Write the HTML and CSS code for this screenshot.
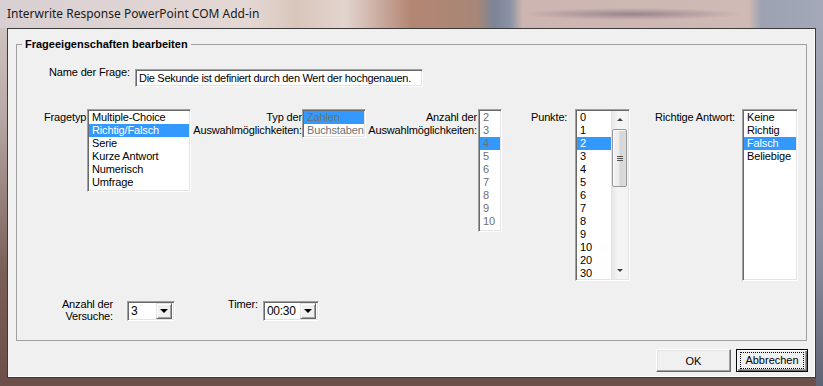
FILE: index.html
```html
<!doctype html>
<html>
<head>
    <title>Interwrite Response PowerPoint COM Add-in</title>
    <meta name="viewport" content="width=device-width, initial-scale=1.0">
    <link rel="stylesheet" href="styles.css">
</head>
<body>

    <div class="window">
        <div class="titlebar">Interwrite Response PowerPoint COM Add-in</div>

        <div class="client">
            <fieldset class="group">
                <legend>Frageeigenschaften bearbeiten</legend>

                <div class="row name-row">
                    <div class="name-label">Name der Frage:</div>
                    <div class="textbox sunken">Die Sekunde ist definiert durch den Wert der hochgenauen.</div>
                </div>

                <div class="row lists-row">
                    <div class="field field-type">
                        <div class="label">Fragetyp:</div>
                        <div class="list sunken">
                            <div class="item">Multiple-Choice</div>
                            <div class="item selected">Richtig/Falsch</div>
                            <div class="item">Serie</div>
                            <div class="item">Kurze Antwort</div>
                            <div class="item">Numerisch</div>
                            <div class="item">Umfrage</div>
                        </div>
                    </div>

                    <div class="field field-kind">
                        <div class="label right">Typ der<br>Auswahlmöglichkeiten:</div>
                        <div class="list sunken disabled">
                            <div class="item selected">Zahlen</div>
                            <div class="item">Buchstaben</div>
                        </div>
                    </div>

                    <div class="field field-count">
                        <div class="label right">Anzahl der<br>Auswahlmöglichkeiten:</div>
                        <div class="list sunken disabled">
                            <div class="item">2</div>
                            <div class="item">3</div>
                            <div class="item selected">4</div>
                            <div class="item">5</div>
                            <div class="item">6</div>
                            <div class="item">7</div>
                            <div class="item">8</div>
                            <div class="item">9</div>
                            <div class="item">10</div>
                        </div>
                    </div>

                    <div class="field field-points">
                        <div class="label">Punkte:</div>
                        <div class="list sunken scrolling">
                            <div class="items">
                                <div class="item">0</div>
                                <div class="item">1</div>
                                <div class="item selected">2</div>
                                <div class="item">3</div>
                                <div class="item">4</div>
                                <div class="item">5</div>
                                <div class="item">6</div>
                                <div class="item">7</div>
                                <div class="item">8</div>
                                <div class="item">9</div>
                                <div class="item">10</div>
                                <div class="item">20</div>
                                <div class="item">30</div>
                            </div>
                            <div class="scrollbar">
                                <div class="arrow up"></div>
                                <div class="thumb">
                                    <span></span><span></span><span></span>
                                </div>
                                <div class="track"></div>
                                <div class="arrow down"></div>
                            </div>
                        </div>
                    </div>

                    <div class="field field-answer">
                        <div class="label">Richtige Antwort:</div>
                        <div class="list sunken">
                            <div class="item">Keine</div>
                            <div class="item">Richtig</div>
                            <div class="item selected">Falsch</div>
                            <div class="item">Beliebige</div>
                        </div>
                    </div>
                </div>

                <div class="row combo-row">
                    <div class="label right tries-label">Anzahl der<br>Versuche:</div>
                    <div class="combo sunken tries">
                        <span class="value">3</span>
                        <span class="drop"><i></i></span>
                    </div>
                    <div class="label timer-label">Timer:</div>
                    <div class="combo sunken timer">
                        <span class="value">00:30</span>
                        <span class="drop"><i></i></span>
                    </div>
                </div>
            </fieldset>

            <div class="buttons">
                <button class="btn ok">OK</button>
                <button class="btn default"><span class="focus">Abbrechen</span></button>
            </div>
        </div>
    </div>

</body>
</html>
```

FILE: styles.css
```css
body {
    margin: 0;
    overflow: hidden;
    font-family: 'Liberation Sans', Arial, sans-serif;
    font-size: 11px;
    letter-spacing: -0.15px;
    color: #000;
}
.window {
    width: 823px;
    height: 386px;
    /* aero frame, blurred desktop behind the glass */
    background: linear-gradient(180deg, #d6cccc 0%, #b8a8a6 30%, #7a5f58 70%, #6b4f48 100%);
    position: relative;
    overflow: hidden;
}
.window::after {
    /* right side of the frame is more blue */
    content: "";
    position: absolute;
    top: 28px;
    right: 0;
    width: 7px;
    height: 358px;
    background: linear-gradient(180deg, #a4a8b6 0%, #8c92a2 60%, #5f6474 100%);
}
.titlebar {
    height: 28px;
    line-height: 28px;
    padding-left: 7px;
    font-family: 'Noto Sans', 'Open Sans', sans-serif;
    font-size: 12px;
    letter-spacing: 0;
    color: #1a1a1a;
    background:
        radial-gradient(ellipse 110px 6px at 632px 14px, rgba(110, 90, 110, 0.55), rgba(110, 90, 110, 0) 100%),
        linear-gradient(90deg, #d8cfd2 0%, #e4d8d4 30%, #d9c6bb 36%, #e2d4ce 42%, #b48573 50%, #a78776 58%, #7c8597 60%, #8a92a4 62%, #cdb5b1 63.5%, #cfbab6 91%, #9ca2b2 92.5%, #a4a8b8 100%);
}
.client {
    margin-left: 7px;
    width: 809px;
    height: 350px;
    box-sizing: border-box;
    border: 1px solid #3a3a3a;
    box-shadow: inset -1px -1px #ffffff;
    background-color: #f0f0f0;
    position: relative;
    z-index: 1;
}
.group {
    margin: 9px 8px 0 8px;
    padding: 0;
    width: 791px;
    height: 303px;
    box-sizing: border-box;
    border: 1px solid #a0a0a0;
    min-inline-size: 0;
}
.group legend {
    margin-left: 5px;
    padding: 0 3px;
    font-weight: bold;
    font-size: 11px;
    line-height: 13px;
    letter-spacing: 0;
}

.row {
    display: flex;
    align-items: flex-start;
}
.label {
    white-space: nowrap;
    line-height: 13px;
}
.label.right {
    text-align: right;
}

/* sunken 3d edge of the old controls */
.sunken {
    background-color: #fff;
    border: 1px solid;
    border-color: #a0a0a0 #ffffff #ffffff #a0a0a0;
    box-shadow: inset 1px 1px #696969, inset -1px -1px #e3e3e3;
    box-sizing: border-box;
}

.name-row {
    margin-top: 15px;
}
.name-label {
    margin-left: 32px;
    width: 86px;
    line-height: 13px;
}
.textbox {
    margin-top: 3px;
    width: 288px;
    height: 18px;
    padding: 1px 0 0 3px;
    line-height: 14px;
    letter-spacing: -0.3px;
    white-space: nowrap;
    overflow: hidden;
}

.lists-row {
    margin-top: 22px;
}
.field {
    display: flex;
    align-items: flex-start;
}
.field .label {
    padding-top: 2px;
}
.list {
    padding: 1px;
    overflow: hidden;
}
.item {
    height: 13px;
    line-height: 13px;
    padding-left: 3px;
    white-space: nowrap;
}
.item.selected {
    background-color: #3399ff;
    color: #fff;
}
.list.disabled .item {
    color: #707070;
}

.field-type {
    margin-left: 27px;
}
.field-type .label {
    width: 45px;
    margin-right: -2px;
}
.field-type .list {
    width: 104px;
    height: 83px;
}
.field-kind .label {
    width: 111px;
}
.field-kind .list {
    width: 64px;
    height: 29px;
}
.field-count .label {
    width: 111px;
    padding-right: 1px;
}
.field-count .list {
    width: 24px;
    height: 123px;
}
.field-points {
    margin-left: 29px;
}
.field-points .label {
    width: 44px;
}
.field-points .list {
    width: 55px;
    height: 172px;
    display: flex;
}
.field-points .items {
    flex: 1;
}
.field-answer {
    margin-left: 25px;
}
.field-answer .label {
    width: 87px;
}
.field-answer .list {
    width: 56px;
    height: 172px;
}

/* vista style scrollbar */
.scrollbar {
    width: 17px;
    display: flex;
    flex-direction: column;
    background: linear-gradient(90deg, #e4e4e4 0%, #f4f4f4 40%, #f4f4f4 100%);
}
.arrow {
    height: 17px;
    display: flex;
    align-items: center;
    justify-content: center;
}
.arrow::before {
    content: "";
    border-left: 3px solid transparent;
    border-right: 3px solid transparent;
}
.arrow.up::before {
    border-bottom: 3px solid #404040;
}
.arrow.down::before {
    border-top: 3px solid #404040;
}
.thumb {
    margin: 1px 1px 0 1px;
    height: 58px;
    border: 1px solid #979797;
    border-radius: 2px;
    box-sizing: border-box;
    background: linear-gradient(90deg, #f2f2f2 0%, #ebebeb 45%, #d6d6d6 55%, #dcdcdc 100%);
    box-shadow: inset 1px 1px #fbfbfb;
    display: flex;
    flex-direction: column;
    align-items: center;
    justify-content: center;
    gap: 1px;
}
.thumb span {
    width: 6px;
    height: 1px;
    background-color: #555;
}
.track {
    flex: 1;
}

.combo-row {
    margin-top: 17px;
}
.tries-label {
    margin-left: 36px;
    width: 60px;
    line-height: 12px;
}
.combo {
    margin-top: 3px;
    height: 20px;
    display: flex;
    align-items: center;
    padding: 2px;
}
.combo .value {
    flex: 1;
    padding-left: 1px;
    font-size: 12px;
    line-height: 16px;
    letter-spacing: -0.3px;
}
.combo .drop {
    width: 16px;
    height: 16px;
    box-sizing: border-box;
    background-color: #f0f0f0;
    border: 1px solid;
    border-color: #e3e3e3 #696969 #696969 #e3e3e3;
    box-shadow: inset 1px 1px #fff, inset -1px -1px #a0a0a0;
    display: flex;
    align-items: center;
    justify-content: center;
}
.combo .drop i {
    border-left: 4px solid transparent;
    border-right: 4px solid transparent;
    border-top: 4px solid #000;
}
.tries {
    margin-left: 14px;
    width: 48px;
}
.timer-label {
    margin-left: 53px;
    width: 35px;
}
.timer {
    width: 56px;
}

.buttons {
    display: flex;
    justify-content: flex-end;
    gap: 5px;
    margin-top: 8px;
    padding-right: 7px;
}
.btn {
    height: 23px;
    padding: 0;
    font-family: 'Liberation Sans', Arial, sans-serif;
    font-size: 11px;
    color: #000;
    background-color: #f0f0f0;
    border: 1px solid;
    border-color: #ffffff #696969 #696969 #ffffff;
    box-shadow: inset -1px -1px #a0a0a0, inset 1px 1px #e3e3e3;
    border-radius: 0;
}
.btn.ok {
    width: 75px;
}
.btn.default {
    width: 72px;
    border: 1px solid #000;
    box-shadow: inset 1px 1px #fff, inset -1px -1px #696969, inset -2px -2px #a0a0a0;
    display: flex;
    align-items: center;
    justify-content: center;
}
.focus {
    display: block;
    width: 64px;
    height: 17px;
    line-height: 15px;
    box-sizing: border-box;
    border: 1px dotted #000;
}
```
